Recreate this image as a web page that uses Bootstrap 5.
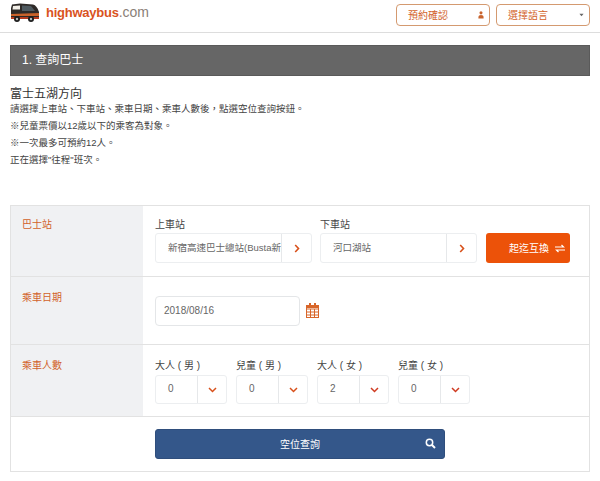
<!DOCTYPE html>
<html lang="zh-Hant">
<head>
<meta charset="utf-8">
<title>highwaybus</title>
<link rel="stylesheet" href="https://cdn.jsdelivr.net/npm/bootstrap@5.3.0/dist/css/bootstrap.min.css">
<style>
html,body{margin:0;background:#fff}
body{font-family:"Liberation Sans","Noto Sans CJK TC",sans-serif;color:#444;font-size:9.5px;height:481px;overflow:hidden}
.hb-head{height:33px;border-bottom:1px solid #ddd;padding:4px 10px 0}
.hb-brand{margin-top:-1px;gap:7px}
.hb-logo{font-size:14px;line-height:19px;color:#8a8078}
.hb-logo b{color:#d9531e;font-size:13px;letter-spacing:-.25px}
.hb-tops{gap:6px}
.hb-top{width:94px;height:22px;border:1px solid #d49a70;border-radius:4px;background:#fff;color:#d2622a;font-size:10px;padding:0 5px 0 11px}
.hb-bar{margin:12px 10px 0;height:31px;background:#666;color:#fff;font-size:12px;line-height:29px;padding-left:11px;border:1px solid #5a5a5a}
.hb-intro{margin:11px 10px 0;height:118px;line-height:17px}
.hb-intro h1{font-size:12px;font-weight:400;line-height:15px;margin:0;color:#333}
.hb-intro p{margin:0;color:#444}
.hb-intro p.hb-first{line-height:13px;margin-bottom:2px}
.hb-tbl{margin:0 10px;border:1px solid #e2e2e2}
.hb-row{border-bottom:1px solid #e2e2e2}
.hb-row:last-child{border-bottom:0}
.hb-lab{width:132px;flex:none;background:#f0f1f3;color:#d2622a;padding:13px 11px 0;font-size:10px}
.hb-r1 .hb-lab{padding-top:11px}
.hb-r1{height:71px}.hb-r2{height:68px}.hb-r3{height:72px}.hb-r4{height:54px}
.hb-cell{padding:0 0 0 12px}
.hb-cell-st{padding-bottom:13px}
.hb-cell-num{padding-bottom:12px}
.hb-cap{font-size:10px;line-height:14px;color:#444;display:block;margin-bottom:2px;white-space:pre}
.hb-st .hb-cap{margin-bottom:1px}
.hb-grp{height:30px;border:1px solid #eceef0;border-radius:3px;background:#fff}
.hb-num .hb-grp{height:29px}
.hb-grp .hb-val{flex:1 1 0;min-width:0;padding-left:12px;line-height:28px;color:#666;white-space:nowrap;overflow:hidden}
.hb-num .hb-grp .hb-val{font-size:10px;line-height:26px}
.hb-grp .hb-ic{border-left:1px solid #e6e8ea;display:flex;align-items:center;justify-content:center}
.hb-st{width:157px}.hb-st .hb-ic{width:30px}
.hb-num{width:72px;margin-right:9px}.hb-num .hb-ic{width:29px}
.hb-swap{width:84px;height:30px;background:#ec5209;border:0;border-radius:3px;color:#fff;font-size:10px;margin-left:9px;padding:0 5px 0 23px}
.hb-date{width:145px;height:30px;border:1px solid #e4e6e8;border-radius:4px;color:#666;padding-left:8px;line-height:28px;font-size:10px}
.hb-cal{gap:6px}
.hb-go{width:290px;height:30px;background:#34578a;border:1px solid #2f4e7c;border-radius:3px;color:#fff;font-size:10px;padding:0;position:relative}
.hb-go svg{position:absolute;right:8px;top:8px}
</style>
</head>
<body>
<header class="hb-head d-flex justify-content-between">
  <div class="hb-brand d-flex align-items-start">
    <svg width="29" height="20" viewBox="0 0 29 20" aria-hidden="true">
      <path d="M2 1.500 10 .5 23 1.500Q27 2.500 29 9V15H1V5Z" fill="#2e2a28"/>
      <path d="M1 11 29 10V13H1Z" fill="#c9622a"/>
      <path d="M3 3 10 2.400V6.500H2.500Z" fill="#f2efe8"/>
      <path d="M12 2.500 21 3 25 8H12Z" fill="#4f5a60"/>
      <path d="M1 14H29V16H1Z" fill="#b53a1e"/>
      <circle cx="7" cy="16" r="3" fill="#1d1d1d"/><circle cx="21" cy="16" r="3" fill="#1d1d1d"/>
      <circle cx="7" cy="16" r="1.200" fill="#bbb"/><circle cx="21" cy="16" r="1.200" fill="#bbb"/>
    </svg>
    <div class="hb-logo"><b>highwaybus</b>.com</div>
  </div>
  <div class="hb-tops d-flex align-items-start">
    <button type="button" class="hb-top d-flex align-items-center justify-content-between">預約確認
      <svg width="6" height="8" viewBox="0 0 7 9" aria-hidden="true"><circle cx="3.500" cy="2" r="1.800" fill="#c8642e"/><path d="M.5 8.500V6.500Q.5 4.500 3.500 4.500T6.500 6.500V8.500Z" fill="#c8642e"/></svg>
    </button>
    <button type="button" class="hb-top d-flex align-items-center justify-content-between">選擇語言
      <svg width="5" height="4" viewBox="0 0 6 4" aria-hidden="true"><path d="M.5.5H5.500L3 3.500Z" fill="#666"/></svg>
    </button>
  </div>
</header>

<div class="hb-bar">1. 查詢巴士</div>

<section class="hb-intro">
  <h1>富士五湖方向</h1>
  <p class="hb-first">請選擇上車站、下車站、乘車日期、乘車人數後，點選空位查詢按鈕。</p>
  <p>※兒童票價以12歲以下的乘客為對象。</p>
  <p>※一次最多可預約12人。</p>
  <p>正在選擇"往程"班次。</p>
</section>

<section class="hb-tbl">
  <div class="hb-row hb-r1 d-flex">
    <div class="hb-lab">巴士站</div>
    <div class="hb-cell hb-cell-st d-flex align-items-end">
      <div class="hb-st me-2">
        <span class="hb-cap">上車站</span>
        <div class="hb-grp d-flex"><span class="hb-val">新宿高速巴士總站(Busta新</span><span class="hb-ic"><svg width="6" height="9" viewBox="0 0 6 9" aria-hidden="true"><path d="M1.200 1 4.500 4.500 1.200 8" fill="none" stroke="#d8501a" stroke-width="1.600"/></svg></span></div>
      </div>
      <div class="hb-st">
        <span class="hb-cap">下車站</span>
        <div class="hb-grp d-flex"><span class="hb-val">河口湖站</span><span class="hb-ic"><svg width="6" height="9" viewBox="0 0 6 9" aria-hidden="true"><path d="M1.200 1 4.500 4.500 1.200 8" fill="none" stroke="#d8501a" stroke-width="1.600"/></svg></span></div>
      </div>
      <button type="button" class="hb-swap d-flex align-items-center justify-content-between">起迄互換
        <svg width="10" height="9" viewBox="0 0 10 9" aria-hidden="true"><path d="M0 3H8.500L6.500 1M10 6H1.500L3.500 8" fill="none" stroke="#fff" stroke-width="1.200"/></svg>
      </button>
    </div>
  </div>
  <div class="hb-row hb-r2 d-flex">
    <div class="hb-lab">乘車日期</div>
    <div class="hb-cell hb-cal d-flex align-items-center">
      <div class="hb-date">2018/08/16</div>
      <svg width="13" height="15" viewBox="0 0 13 15" aria-hidden="true"><g fill="none" stroke="#d8662a" stroke-width="1"><rect x=".5" y="2.500" width="12" height="12"/><path d="M.5 6H12.500M4.500 6V14.500M8.500 6V14.500M.5 9H12.500M.5 12H12.500"/></g><path d="M3 0H5V3H3ZM8 0H10V3H8ZM.5 2.500H12.500V5H.5Z" fill="#d8662a"/></svg>
    </div>
  </div>
  <div class="hb-row hb-r3 d-flex">
    <div class="hb-lab">乘車人數</div>
    <div class="hb-cell hb-cell-num d-flex align-items-end">
      <div class="hb-num"><span class="hb-cap">大人 ( 男 )</span><div class="hb-grp d-flex"><span class="hb-val">0</span><span class="hb-ic"><svg width="9" height="6" viewBox="0 0 9 6" aria-hidden="true"><path d="M1 1 4.500 4.500 8 1" fill="none" stroke="#d8501a" stroke-width="1.500"/></svg></span></div></div>
      <div class="hb-num"><span class="hb-cap">兒童 ( 男 )</span><div class="hb-grp d-flex"><span class="hb-val">0</span><span class="hb-ic"><svg width="9" height="6" viewBox="0 0 9 6" aria-hidden="true"><path d="M1 1 4.500 4.500 8 1" fill="none" stroke="#d8501a" stroke-width="1.500"/></svg></span></div></div>
      <div class="hb-num"><span class="hb-cap">大人 ( 女 )</span><div class="hb-grp d-flex"><span class="hb-val">2</span><span class="hb-ic"><svg width="9" height="6" viewBox="0 0 9 6" aria-hidden="true"><path d="M1 1 4.500 4.500 8 1" fill="none" stroke="#cf3a20" stroke-width="1.500"/></svg></span></div></div>
      <div class="hb-num"><span class="hb-cap">兒童 ( 女 )</span><div class="hb-grp d-flex"><span class="hb-val">0</span><span class="hb-ic"><svg width="9" height="6" viewBox="0 0 9 6" aria-hidden="true"><path d="M1 1 4.500 4.500 8 1" fill="none" stroke="#cf3a20" stroke-width="1.500"/></svg></span></div></div>
    </div>
  </div>
  <div class="hb-row hb-r4 d-flex">
    <div class="hb-lab bg-white"></div>
    <div class="hb-cell d-flex align-items-start pt-2 mt-1">
      <button type="button" class="hb-go">空位查詢
        <svg width="11" height="11" viewBox="0 0 11 11" aria-hidden="true"><circle cx="4.500" cy="4.500" r="3.200" fill="none" stroke="#fff" stroke-width="1.500"/><path d="M7 7 10 10" stroke="#fff" stroke-width="2"/></svg>
      </button>
    </div>
  </div>
</section>
</body>
</html>
